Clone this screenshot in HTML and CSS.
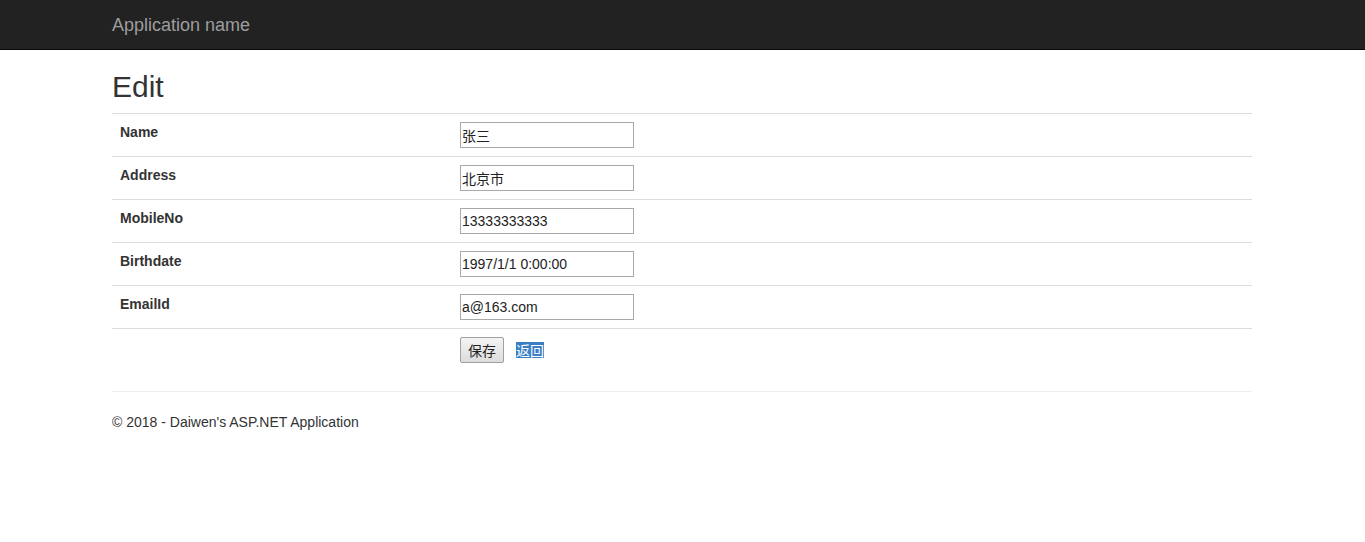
FILE: index.html
```html
<!DOCTYPE html>
<html>
<head>
<meta charset="utf-8">
<title>Edit - Application name</title>
<link rel="stylesheet" href="styles.css">
</head>
<body>
<!-- Header -->
<div class="navbar">
    <div class="container">
        <a class="navbar-brand" href="#">Application name</a>
    </div>
</div>

<!-- Content -->
<div class="container body-content">
    <h2>Edit</h2>
    <table class="table">
        <tr>
            <td class="field-label">Name</td>
            <td><input class="field" type="text" value="张三"></td>
        </tr>
        <tr>
            <td class="field-label">Address</td>
            <td><input class="field" type="text" value="北京市"></td>
        </tr>
        <tr>
            <td class="field-label">MobileNo</td>
            <td><input class="field" type="text" value="13333333333"></td>
        </tr>
        <tr>
            <td class="field-label">Birthdate</td>
            <td><input class="field" type="text" value="1997/1/1 0:00:00"></td>
        </tr>
        <tr>
            <td class="field-label">EmailId</td>
            <td><input class="field" type="text" value="a@163.com"></td>
        </tr>
        <tr>
            <td></td>
            <td>
                <div class="actions">
                    <button class="btn-save" type="submit">保存</button>
                    <a class="back-link" href="#">返回</a>
                </div>
            </td>
        </tr>
    </table>

    <!-- Footer -->
    <hr/>
    <footer>
        <p>&copy; 2018 - Daiwen's ASP.NET Application</p>
    </footer>
</div>
</body>
</html>
```

FILE: styles.css
```css
body {
    font-family: "Liberation Sans", Arial, "Noto Sans CJK SC", sans-serif;
    font-size: 14px;
    line-height: 20px;
    color: #333;
    background: #fff;
    margin: 0;
    padding: 0;
}
a {
    color: #337ab7;
    text-decoration: none;
}
.container {
    width: 1140px;
    margin: 0 auto;
    padding: 0 15px 0 14px;
}
.navbar {
    height: 50px;
    box-sizing: border-box;
    background: #222;
    border-bottom: 1px solid #080808;
}
.navbar-brand {
    display: block;
    height: 49px;
    line-height: 50px;
    font-size: 18px;
    color: #9d9d9d;
}
h2 {
    font-size: 30px;
    font-weight: 500;
    line-height: 33px;
    margin: 20px 0 10px;
    color: #333;
}
.table {
    width: 100%;
    border-collapse: collapse;
    border-spacing: 0;
    margin-bottom: 20px;
}
.table td {
    border-top: 1px solid #ddd;
    padding: 8px;
    vertical-align: top;
    line-height: 20px;
}
.table td.field-label {
    width: 324px;
    font-weight: bold;
}
.field {
    display: block;
    width: 174px;
    height: 26px;
    box-sizing: border-box;
    margin: 0;
    padding: 1px 1px;
    border: 1px solid #a9a9a9;
    font-family: "Liberation Sans", Arial, "Noto Sans CJK SC", sans-serif;
    font-size: 14px;
    color: #222;
    background: #fff;
}
.actions {
    display: flex;
    align-items: center;
    gap: 12px;
    height: 26px;
}
.btn-save {
    width: 44px;
    height: 26px;
    padding: 0;
    margin: 0;
    font-family: "Noto Sans CJK SC", sans-serif;
    font-size: 14px;
    color: #222;
    background: linear-gradient(#f4f4f4, #dcdcdc);
    border: 1px solid #a0a0a0;
    border-radius: 2px;
}
.back-link {
    font-family: "Noto Sans CJK SC", sans-serif;
    font-size: 14px;
    line-height: 16px;
    color: #fff;
    background: #3a7ec6;
}
hr {
    border: none;
    border-top: 1px solid #eee;
    margin: 20px 0;
    height: 0;
}
footer p {
    margin: 0 0 10px;
}
```
